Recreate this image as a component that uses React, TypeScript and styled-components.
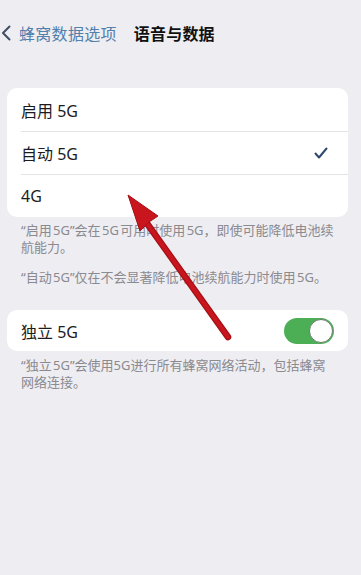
import React from "react";
import styled, { createGlobalStyle } from "styled-components";

const Global = createGlobalStyle`
  html, body { margin: 0; padding: 0; background: #eeedf2; }
  body { font-family: "Noto Sans", "Noto Sans CJK SC", sans-serif; }
`;

const Page = styled.div`
  position: relative;
  width: 361px;
  height: 575px;
  overflow: hidden;
  background: #eeedf2;
`;

const Nav = styled.div`
  height: 66px;
  display: flex;
  align-items: center;
  padding-left: 1px;
`;

const Back = styled.div`
  display: flex;
  align-items: center;
  gap: 8px;
  color: #527fab;
  font-size: 16px;
  letter-spacing: 0.3px;
`;

const Title = styled.div`
  margin-left: 17px;
  font-size: 16px;
  font-weight: 700;
  color: #111;
  letter-spacing: 0.2px;
`;

const Card = styled.div<{ $top: number }>`
  margin: ${(p) => p.$top}px 13px 0 7px;
  background: #fff;
  border-radius: 10px;
  overflow: hidden;
`;

const Row = styled.div<{ $h?: number; $divider?: boolean }>`
  height: ${(p) => p.$h ?? 43}px;
  display: flex;
  align-items: center;
  justify-content: space-between;
  margin-left: 14px;
  padding-right: 14px;
  font-size: 16px;
  color: #1c1c1e;
  box-sizing: border-box;
  border-top: ${(p) => (p.$divider ? "1px solid #e3e3e8" : "none")};
`;

const Footer = styled.div<{ $pt: number }>`
  padding: ${(p) => p.$pt}px 25px 0 21px;
  font-size: 13px;
  line-height: 17px;
  word-spacing: -2px;
  color: #8a8a8f;
`;

const Para = styled.p<{ $mt?: number }>`
  margin: ${(p) => p.$mt ?? 0}px 0 0 0;
`;

const Switch = styled.div`
  width: 50px;
  height: 26px;
  border-radius: 13px;
  background: #4caf56;
  position: relative;
`;

const Knob = styled.div`
  position: absolute;
  right: 1px;
  top: 1px;
  width: 24px;
  height: 24px;
  border-radius: 50%;
  background: #fff;
  box-sizing: border-box;
  border: 1.5px solid #6d7a70;
`;

const ArrowLayer = styled.svg`
  position: absolute;
  left: 0;
  top: 0;
  pointer-events: none;
`;

export default function App() {
  return (
    <Page>
      <Global />
      <Nav>
        <Back>
          <svg width="10" height="16" viewBox="0 0 10 16">
            <path d="M8.5 1.5 L2 8 L8.5 14.5" fill="none" stroke="#3f4f63" strokeWidth="2" strokeLinecap="round" strokeLinejoin="round" />
          </svg>
          <span>蜂窝数据选项</span>
        </Back>
        <Title>语音与数据</Title>
      </Nav>
      <Card $top={22}>
        <Row>启用 5G</Row>
        <Row $divider>
          <span>自动 5G</span>
          <svg width="14" height="12" viewBox="0 0 14 12" style={{ marginRight: 6 }}>
            <path d="M1.5 6.5 L5 10.5 L12.5 1.5" fill="none" stroke="#2f4870" strokeWidth="2" strokeLinecap="round" strokeLinejoin="round" />
          </svg>
        </Row>
        <Row $divider>4G</Row>
      </Card>
      <Footer $pt={5}>
        <Para>“启用 5G”会在 5G 可用时使用 5G，即使可能降低电池续航能力。</Para>
        <Para $mt={13}>“自动 5G”仅在不会显著降低电池续航能力时使用 5G。</Para>
      </Footer>
      <Card $top={24}>
        <Row $h={41}>
          <span>独立 5G</span>
          <Switch>
            <Knob />
          </Switch>
        </Row>
      </Card>
      <Footer $pt={6}>
        <Para>“独立 5G”会使用5G进行所有蜂窝网络活动，包括蜂窝网络连接。</Para>
      </Footer>
      <ArrowLayer width="361" height="575" viewBox="0 0 361 575">
        <line x1="228" y1="337" x2="146" y2="222" stroke="#a50f16" strokeWidth="6.5" strokeLinecap="round" />
        <line x1="228" y1="337" x2="146" y2="222" stroke="#c9161e" strokeWidth="4" strokeLinecap="round" />
        <polygon points="128,195 158,216 149,222 140,231" fill="#c9161e" stroke="#a50f16" strokeWidth="1" strokeLinejoin="round" />
      </ArrowLayer>
    </Page>
  );
}
